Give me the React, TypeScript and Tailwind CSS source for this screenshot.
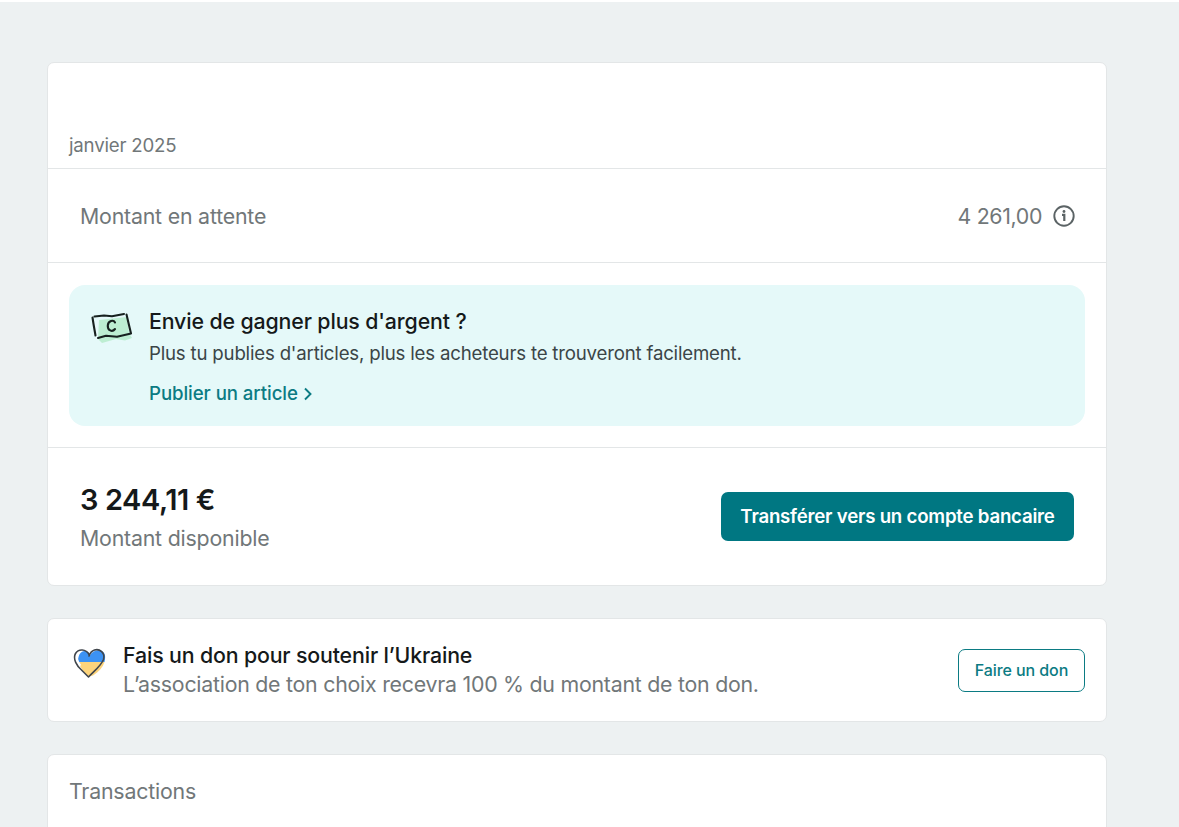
const BanknoteIcon = () => (
  <svg className="h-8 w-11 shrink-0" viewBox="0 0 44 32" fill="none">
    <path d="M9 9 37 6 39 22 42 27 35 29.500 26 28 12 32 8 28Z" fill="#bdeed2" />
    <path
      d="M2.500 6.500 3.500 13 5.500 24.500M4.500 5.500 14 4.500 22 5.200 34 3M36.500 3.500 38.500 12 41 22.500M8 27 16 24.800 27 25.800 41 22.500"
      stroke="#17211f"
      strokeWidth="2.100"
      strokeLinecap="round"
      strokeLinejoin="round"
    />
    <path d="M25 11.500C23.500 8.500 18.300 9.700 17.800 14.300 17.300 19.500 22.300 21.500 25 18" stroke="#17211f" strokeWidth="2.100" strokeLinecap="round" />
  </svg>
);

const HeartIcon = () => (
  <svg className="h-8 w-9 shrink-0" viewBox="0 0 36 32" fill="none">
    <path d="M6 15C5.500 9 8.500 4 12.500 4c3 0 4.500 1.500 5.500 4C20.500 4 25 2.500 29 3.500c4 1.500 5 6 3.500 11.500Z" fill="#3c92f3" />
    <path d="M6 15h26.500C31 20 27 24.500 21 28.500l-4.500 1C12 25.500 8 20 6 15Z" fill="#fdd47b" />
    <path d="M8 19C4 14 4 9 6 6" stroke="#fff" strokeWidth="3" />
    <path
      d="M17 7.500C14 2 6.500 1.500 3.500 6.500 0.500 12 5 19 9.500 23L16.500 30C21.500 24.500 29 19 31.500 12.500 33.500 5.500 27.500 1.500 22.500 3 19.500 4 18 6 17 9"
      stroke="#41464c"
      strokeWidth="1.600"
      strokeLinecap="round"
      strokeLinejoin="round"
    />
  </svg>
);

const InfoIcon = () => (
  <svg className="-mr-px size-[22px]" viewBox="0 0 22 22" fill="none">
    <circle cx="11" cy="11" r="9.700" stroke="#5b6365" strokeWidth="1.900" />
    <path d="M9 9.800h2.300v6.200" stroke="#5b6365" strokeWidth="2.200" />
    <circle cx="11" cy="6.500" r="1.400" fill="#5b6365" />
  </svg>
);

const ChevronIcon = () => (
  <svg className="h-3.5 w-2.5" viewBox="0 0 10 14" fill="none">
    <path d="M2 1.500 7.500 7 2 12.500" stroke="#0b7b83" strokeWidth="1.900" />
  </svg>
);

export default function App() {
  return (
    <main className="h-[827px] overflow-hidden border-t-2 border-white bg-[#edf1f2] pt-[60px] pr-[72px] pl-[47px] font-['Inter',sans-serif] text-[#717779]">
      <div className="flex flex-col gap-8">
        <section className="h-[524px] rounded-[7px] border border-[#e3e6e7] bg-white">
          <div className="flex h-[106px] items-end border-b border-[#e3e6e7] px-[21px] pb-2 text-[18.67px] leading-7 tracking-[-0.2px]">
            janvier 2025
          </div>
          <div className="flex h-[94px] items-center justify-between border-b border-[#e3e6e7] px-8 pt-0.5 text-[21.33px]">
            <span className="tracking-[-0.2px]">Montant en attente</span>
            <div className="flex items-center gap-[11px]">
              <span className="tracking-[-0.35px]">4 261,00</span>
              <InfoIcon />
            </div>
          </div>
          <div className="h-[185px] border-b border-[#e3e6e7] px-[21px] pt-[22px]">
            <div className="flex h-[141px] gap-[15px] rounded-[16px] bg-[#e5f9f9] px-[21px] pt-[21px]">
              <div className="pt-[5px]">
                <BanknoteIcon />
              </div>
              <div>
                <h2 className="text-[21.33px] leading-[30px] font-medium tracking-[-0.13px] text-[#15191a]">
                  Envie de gagner plus d'argent ?
                </h2>
                <p className="mt-1 text-[18.67px] leading-7 tracking-[-0.2px] text-[#3b4547]">
                  Plus tu publies d'articles, plus les acheteurs te trouveront facilement.
                </p>
                <a
                  className="mt-3 flex items-center gap-[5px] text-[18.67px] leading-7 font-medium tracking-[-0.08px] text-[#0b7b83]"
                  href="#"
                >
                  Publier un article
                  <ChevronIcon />
                </a>
              </div>
            </div>
          </div>
          <div className="flex h-[137px] items-center justify-between px-8">
            <div className="pt-1">
              <div className="text-[29px] leading-10 font-semibold tracking-[-0.42px] text-[#15191a]">3 244,11 €</div>
              <div className="text-[21.33px] leading-[37px] tracking-[-0.2px]">Montant disponible</div>
            </div>
            <button className="h-[49px] w-[353px] rounded-[7px] bg-[#007782] text-[18.67px] font-semibold tracking-[-0.22px] whitespace-nowrap text-white">
              Transférer vers un compte bancaire
            </button>
          </div>
        </section>

        <section className="flex h-[104px] items-center justify-between rounded-[7px] border border-[#e3e6e7] bg-white pr-[21px] pl-6">
          <div className="flex gap-[15px]">
            <div className="pt-1.5">
              <HeartIcon />
            </div>
            <div className="text-[21.33px] leading-[29px]">
              <h2 className="font-medium tracking-[-0.15px] text-[#15191a]">Fais un don pour soutenir l’Ukraine</h2>
              <p className="tracking-[-0.245px]">L’association de ton choix recevra 100 % du montant de ton don.</p>
            </div>
          </div>
          <button className="h-[43px] w-[127px] rounded-[7px] border border-[#0b7b83] text-base font-medium tracking-[-0.08px] whitespace-nowrap text-[#0b7b83]">
            Faire un don
          </button>
        </section>

        <section className="h-[104px] rounded-[7px] border border-[#e3e6e7] bg-white px-[21px] pt-5">
          <h2 className="text-[21.33px] leading-8 tracking-[-0.2px]">Transactions</h2>
        </section>
      </div>
    </main>
  );
}
